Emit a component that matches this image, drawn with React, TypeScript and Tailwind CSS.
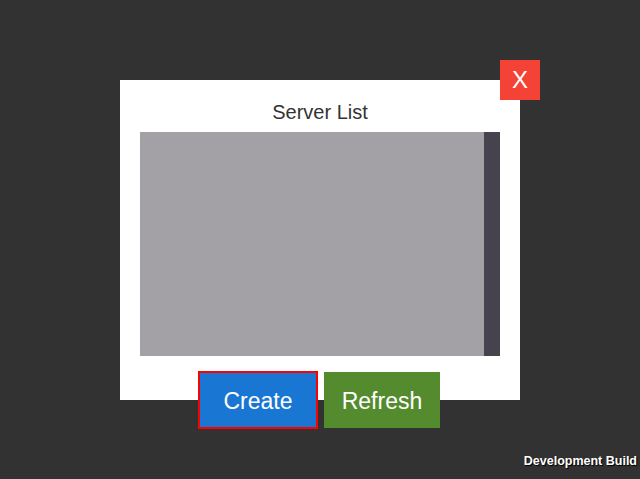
export default function App() {
  return (
    <div
      className="relative w-[640px] h-[479px] bg-[#323232] overflow-hidden"
      style={{ fontFamily: '"Liberation Sans", Arial, sans-serif' }}
    >
      <div className="flex justify-center pt-[80px]">
        <div className="relative w-[400px] h-[320px] bg-white flex flex-col items-center">
          <button className="absolute -top-5 -right-5 w-10 h-10 bg-[#f44336] text-white text-[24px] leading-none flex items-center justify-center">
            X
          </button>
          <div className="shrink-0 h-[52px] flex items-center justify-center text-[20px] text-[#333333] pt-[12px]">
            Server List
          </div>
          <div className="shrink-0 w-[360px] h-[224px] bg-[#a3a0a6] flex justify-end">
            <div className="w-4 h-full bg-[#46434f]" />
          </div>
          <div className="shrink-0 flex items-center gap-[6px] mt-[15px] -translate-x-[1px]">
            <button className="w-[120px] h-[58px] bg-[#1976d2] border-2 border-[#ff0000] text-white text-[23px] pt-[2px]">
              Create
            </button>
            <button className="w-[116px] h-[56px] bg-[#558b2f] text-white text-[23px] pt-[2px]">
              Refresh
            </button>
          </div>
        </div>
      </div>
      <div className="absolute right-[3px] bottom-[8px] text-white text-[12.5px] font-bold [text-shadow:1px_1px_1px_#000]">
        Development Build
      </div>
    </div>
  );
}
